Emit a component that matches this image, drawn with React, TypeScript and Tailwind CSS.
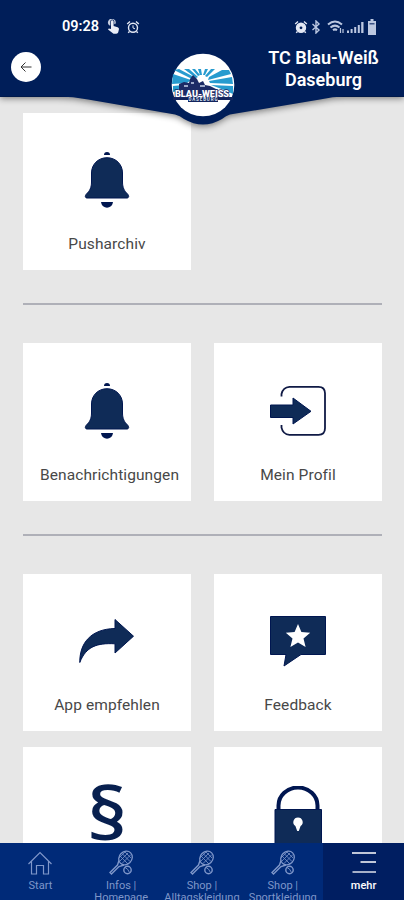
import type { ReactNode } from 'react';

interface TileProps {
  label: string;
  icon: ReactNode;
  labelClass?: string;
}

interface NavItem {
  lines: string[];
  icon: ReactNode;
  active?: boolean;
}

function BellIcon() {
  return (
    <svg viewBox="0 0 56 56" className="w-14 h-14" fill="#0f2b57">
      <path d="M25 3a3 3 0 0 1 6 0z" fill="#001650" />
      <path
        d="M28 5.700C19 5.700 12.500 12.500 12.500 21v9c0 6-2 9-5 12-2 2-1.200 4 .5 4h40c1.700 0 2.500-2 .5-4-3-3-5-6-5-12v-9c0-8.500-6.500-15.300-15.500-15.300z"
        stroke="#001650"
        strokeWidth="1"
      />
      <path d="M22 50h12c-1 7.500-11 7.500-12 0z" fill="#001650" />
    </svg>
  );
}

function ProfileIcon() {
  return (
    <svg viewBox="0 0 56 56" className="w-14 h-14" fill="none">
      <path
        d="M11.500 13.500V11q1.500-6.800 8-7.200h29q6.500 0 6.500 6.500v35q0 6.500-6.500 6.500h-29q-6.500-.4-8-7.200V42"
        stroke="#101a45"
        strokeWidth="1.800"
      />
      <path d="M.5 22h22.500v-7L41 28.300 23 41v-6.500H.5z" fill="#0f2b57" stroke="#001650" />
    </svg>
  );
}

function ShareIcon() {
  return (
    <svg viewBox="0 0 56 56" className="w-14 h-14">
      <path
        d="M36 6.500l18.500 16.700L36 40v-9.200C18 29.800 7 33.500.8 49.500.5 30 12 16 36 15.500z"
        fill="#0f2b57"
        stroke="#001650"
      />
    </svg>
  );
}

function FeedbackIcon() {
  return (
    <svg viewBox="0 0 56 56" className="w-14 h-14">
      <path d="M.5 3.500h55v38H31L14 53l2-11.500H.5z" fill="#0f2b57" stroke="#001650" />
      <path
        d="M28 11l3.400 8.100 8.800.7-6.700 5.700 2.100 8.500-7.600-4.600-7.600 4.600 2.100-8.500-6.700-5.700 8.800-.7z"
        fill="#fff"
      />
    </svg>
  );
}

function LockIcon() {
  return (
    <svg viewBox="0 0 56 64" className="w-14 h-16">
      <path d="M8.500 25V19.500a19.500 18 0 0 1 39 0V25" fill="none" stroke="#001650" strokeWidth="4" />
      <path d="M5 23.500h46.500V64H5z" fill="#0f2b57" stroke="#001650" />
      <path d="M28 31.500a4.700 4.700 0 0 1 2.600 8.600L28.800 45h-1.600l-1.800-4.900A4.700 4.700 0 0 1 28 31.500z" fill="#fff" />
    </svg>
  );
}

function ParagraphIcon() {
  return (
    <svg viewBox="0 0 56 56" className="w-14 h-14 overflow-visible">
      <text
        transform="translate(28 54) scale(1.220 1.090)"
        textAnchor="middle"
        fontSize="66"
        fontWeight="600"
        fontFamily="'Open Sans', sans-serif"
        fill="#08204f"
      >
        §
      </text>
    </svg>
  );
}

function RacketIcon() {
  return (
    <svg viewBox="0 0 26 26" className="w-[26px] h-[26px] shrink-0" fill="none" stroke="currentColor">
      <ellipse cx="17.500" cy="8" rx="7.300" ry="6.300" transform="rotate(-45 17.500 8)" strokeWidth="1.300" />
      <path d="M12 6l8 8M14 3.500l8 8M17 2l6 6M12 11l8-8M14 13.500l9-9M11 8l6-6" strokeWidth=".8" />
      <path d="M11 10.500l-1.500 4.500-7.500 7.500 1.500 1.500 7.500-7.500 5-1.500" strokeWidth="1.400" />
      <circle cx="19.500" cy="20" r="3.700" strokeWidth="1.400" />
      <path d="M17 17.500q3 1 4.500 5" strokeWidth=".9" />
    </svg>
  );
}

function HomeIcon() {
  return (
    <svg
      viewBox="0 0 26 26"
      className="w-[26px] h-[26px] shrink-0"
      fill="none"
      stroke="currentColor"
      strokeWidth="1.200"
    >
      <path d="M1.500 14L13 2.500 24.500 14M4.500 11.500V24h5v-8.500h7V24h5V11.500" />
    </svg>
  );
}

function MoreIcon() {
  return (
    <svg viewBox="0 0 26 26" className="w-[26px] h-[26px] shrink-0" stroke="currentColor" strokeWidth="1.500">
      <path d="M1 3h24M9.500 12H25" />
      <path d="M1.500 22H25" strokeWidth="2" opacity=".65" />
    </svg>
  );
}

function ClubLogo() {
  return (
    <svg viewBox="0 0 64 64" className="w-16 h-16">
      <circle cx="32" cy="32" r="31.300" fill="#fff" />
      <g fill="#279bcf">
        <path d="M3 17l5-1 17 9-2 2z" />
        <path d="M2 21l18 6-4 3-15 1z" />
        <path d="M13 16h5l9 8-2 1zM21 16h3l5 6-2 1zM27 16h3l1 6h-2zM34 16h3l-3 6h-2zM40 16h4l-8 8-2-1z" />
        <path d="M38 24l13-7h7l2 4-23 6z" />
        <path d="M38 28l23-4 1 7-23-1z" />
        <path d="M40 32l22 1v8l-9-4z" />
        <path d="M2 33l10-1-6 6-4 1z" />
      </g>
      <path d="M8 38v-7l5-2 5 1 1-4 3-4 4 4 2 4 4-2 2 4 5 1 8 4v5H8z" fill="#1c2b66" />
      <path d="M13 33h4M20 30h3M29 33h5" stroke="#c8d3ea" strokeWidth="1.500" />
      <path d="M2 44h60v3H47v2H17v-2H2z" fill="#12235c" />
      <text
        x="31"
        y="44"
        textAnchor="middle"
        textLength="54"
        lengthAdjust="spacingAndGlyphs"
        fontSize="9"
        fontWeight="900"
        fontFamily="Roboto, sans-serif"
        fill="#fff"
        stroke="#1c2b66"
        strokeWidth="1.500"
        paintOrder="stroke"
      >
        BLAU-WEISS
      </text>
      <text
        x="32"
        y="48.300"
        textAnchor="middle"
        textLength="29"
        fontSize="4.500"
        fontWeight="700"
        fontFamily="Roboto, sans-serif"
        fill="#dfe5f2"
      >
        DASEBURG
      </text>
    </svg>
  );
}

function AlarmIcon({ filled = false }: { filled?: boolean }) {
  return (
    <svg viewBox="0 0 14 14" className="w-3.5 h-3.5" fill="none" stroke="#e3e8f4" strokeWidth="1.400">
      <circle cx="7" cy="7.800" r="4.500" fill={filled ? '#e3e8f4' : 'none'} />
      <path d="M1.200 4L4 1.500M12.800 4L10 1.500M3.500 11.500l-1.300 1.300M10.500 11.500l1.300 1.300" />
      {filled ? (
        <circle cx="7" cy="7.800" r="1.400" fill="#001e59" stroke="none" />
      ) : (
        <path d="M7 5.300V8l2 .8" strokeWidth="1" />
      )}
    </svg>
  );
}

function StatusBar() {
  return (
    <div className="flex items-center justify-between h-[54px] pl-[62px] pr-[27px]">
      <div className="flex items-center">
        <span className="w-[37px] text-[14.500px] font-semibold leading-none text-white whitespace-nowrap">09:28</span>
        <svg viewBox="0 0 14 16" className="w-3.5 h-4 ml-[7px]" fill="#e9edf7">
          <path d="M5 2.500a1.300 1.300 0 0 1 2.600 0V7l4 1.200c1.200.5 1.500 1.200 1.300 2.200l-.6 2.600c-.3 1.200-1 1.700-2 1.700H7.500L2 10.500l.8-1L5 10z" />
          <path d="M3.500 6.500a3.800 3.800 0 1 1 5.700-1.200L8.300 5V2.500a2 2 0 0 0-4 0v4z" opacity=".85" />
        </svg>
        <span className="ml-[6px]">
          <AlarmIcon />
        </span>
      </div>
      <div className="flex items-center">
        <AlarmIcon filled />
        <svg viewBox="0 0 10 14" className="w-2.5 h-3.5 ml-[3px]" fill="none" stroke="#bcc8e1" strokeWidth="1.400">
          <path d="M1.500 4l6.500 6-3 3V1l3 3-6.500 6" />
        </svg>
        <svg viewBox="0 0 17 14" className="w-[17px] h-3.5 ml-[6px]" fill="none" stroke="#bcc8e1" strokeWidth="2">
          <path d="M1 4.500q7-6 14 0M3.500 7.500q4.500-3.700 9 0M6 10.200q2-1.600 4 0" />
          <path d="M13.500 8v5M16 9v4" strokeWidth="1.200" />
        </svg>
        <svg viewBox="0 0 17 13" className="w-[17px] h-[13px] ml-[3px]" fill="#bcc8e1">
          <path d="M0 9.500h2V12H0zM3.600 8h2v4h-2zM7.200 6h2v6h-2zM10.800 4h2v8h-2zM14.200 1h2.300v11h-2.300z" />
        </svg>
        <svg viewBox="0 0 8 16" className="w-2 h-4 ml-[4px] mr-px" fill="#bcc8e1">
          <path d="M2.500 0h3v2H8v14H0V2h2.500z" />
          <path d="M1.500 4h5v1.500h-5z" fill="#3a5286" />
        </svg>
      </div>
    </div>
  );
}

function Header() {
  return (
    <header className="relative z-10 h-[97px] shrink-0 bg-[#001e59]">
      {/* curved lower edge and the round badge hanging over the content */}
      <svg
        viewBox="0 0 404 130"
        className="absolute left-0 top-0 w-[404px] h-[130px] drop-shadow-[0_2px_3px_rgba(0,0,0,0.45)]"
        fill="#001e59"
      >
        <path d="M0 0h404v96.500h-59q-12 0-25 3l-90 15q-4 1-8 4.500-19 11-38 0-4-3.500-9-4.500L88 99.500q-15-3-30-3H0z" />
      </svg>
      <div className="relative">
        <StatusBar />
        <div className="grid grid-cols-[172px_64px_1fr] items-start">
          <button className="flex items-center justify-center w-[30px] h-[30px] ml-[11px] -mt-0.5 rounded-full bg-white">
            <svg viewBox="0 0 12 12" className="w-3 h-3" fill="none" stroke="#333" strokeWidth="1">
              <path d="M11.500 6H1M5.500 1.500L1 6l4.500 4.500" />
            </svg>
          </button>
          <div className="-ml-px -mt-px">
            <ClubLogo />
          </div>
          <h1 className="w-[130px] ml-[22.500px] -mt-[7px] text-center text-lg leading-[21.500px] font-semibold text-white">
            TC Blau-Weiß Daseburg
          </h1>
        </div>
      </div>
    </header>
  );
}

function Tile({ label, icon, labelClass = '' }: TileProps) {
  return (
    <div className="flex flex-col items-center h-[157.500px] pt-[39.500px] bg-white">
      <div className="flex justify-center h-14">{icon}</div>
      <span
        className={`mt-[26px] text-[15.500px] leading-5 tracking-[0.1px] text-[#484848] whitespace-nowrap ${labelClass}`}
      >
        {label}
      </span>
    </div>
  );
}

const sections: TileProps[][] = [
  [{ label: 'Pusharchiv', icon: <BellIcon /> }],
  [
    { label: 'Benachrichtigungen', icon: <BellIcon />, labelClass: 'ml-[5px]' },
    { label: 'Mein Profil', icon: <ProfileIcon /> },
  ],
  [
    { label: 'App empfehlen', icon: <ShareIcon /> },
    { label: 'Feedback', icon: <FeedbackIcon /> },
    { label: '', icon: <ParagraphIcon /> },
    { label: '', icon: <LockIcon /> },
  ],
];

const navItems: NavItem[] = [
  { lines: ['Start'], icon: <HomeIcon /> },
  { lines: ['Infos |', 'Homepage'], icon: <RacketIcon /> },
  { lines: ['Shop |', 'Alltagskleidung'], icon: <RacketIcon /> },
  { lines: ['Shop |', 'Sportkleidung'], icon: <RacketIcon /> },
  { lines: ['mehr'], icon: <MoreIcon />, active: true },
];

export default function App() {
  return (
    <div className="flex flex-col w-[404px] h-[900px] overflow-hidden bg-[#e7e7e7] font-[Roboto,sans-serif]">
      <Header />
      <main className="flex-1 min-h-0 overflow-hidden pl-[23px] pr-[22px] pt-[15.500px]">
        {sections.map((tiles, i) => (
          <section key={i}>
            {i > 0 && <hr className="mt-[33px] mb-[38px] h-0.5 border-0 bg-[#afb0b8]" />}
            <div className="grid grid-cols-2 gap-x-[23px] gap-y-[15.500px]">
              {tiles.map((tile, j) => (
                <Tile key={j} {...tile} />
              ))}
            </div>
          </section>
        ))}
      </main>
      <nav className="relative z-10 grid grid-cols-5 h-[57px] shrink-0 overflow-hidden bg-[#002a78]">
        {navItems.map((item, i) => (
          <div
            key={i}
            className={`flex flex-col items-center h-[57px] pt-[7px] ${
              item.active ? 'bg-[#001e61] text-white' : 'text-[#7f97ca]'
            }`}
          >
            {item.icon}
            <div
              className={`mt-[4px] flex flex-col items-center text-[11px] leading-[12px] whitespace-nowrap ${
                item.active ? 'font-medium' : ''
              }`}
            >
              {item.lines.map((line) => (
                <span key={line}>{line}</span>
              ))}
            </div>
          </div>
        ))}
      </nav>
    </div>
  );
}
